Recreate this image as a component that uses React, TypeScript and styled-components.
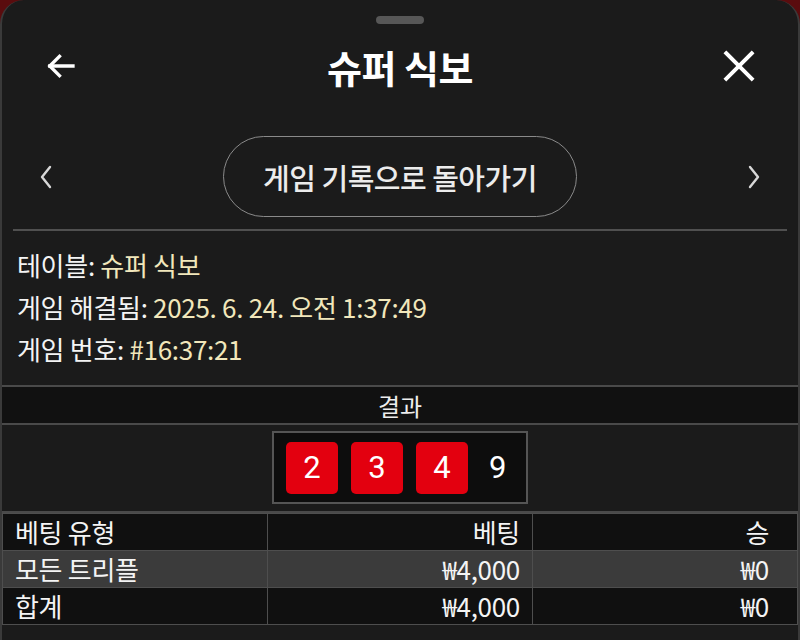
import React from 'react';
import styled, { createGlobalStyle } from 'styled-components';

// ===== DATA =====
const INFO = [
  { label: '테이블', value: '슈퍼 식보' },
  { label: '게임 해결됨', value: '2025. 6. 24. 오전 1:37:49' },
  { label: '게임 번호', value: '#16:37:21' },
];

const DICE = [2, 3, 4];
const TOTAL = 9;

const ROWS = [
  { type: '모든 트리플', bet: '₩4,000', win: '₩0', highlight: true },
  { type: '합계', bet: '₩4,000', win: '₩0', highlight: false },
];

// ===== GLOBAL =====
const GlobalStyle = createGlobalStyle`
  html, body {
    margin: 0;
    padding: 0;
    background: #5a0c0e;
  }
  body {
    font-family: "Noto Sans CJK KR", "Noto Sans", "Liberation Sans", sans-serif;
    color: #f2f2f2;
  }
  * { box-sizing: border-box; }
`;

// ===== STYLED =====
const Sheet = styled.div`
  width: 800px;
  min-height: 640px;
  background: #1b1b1b;
  border-left: 2px solid #3a3a3a;
  border-right: 2px solid #3a3a3a;
  border-radius: 24px 24px 0 0;
  overflow: hidden;
`;

const Handle = styled.div`
  width: 48px;
  height: 8px;
  margin: 16px auto 0;
  border-radius: 4px;
  background: #575757;
`;

const Header = styled.div`
  height: 84px;
  padding: 0 40px;
  display: flex;
  align-items: center;
  justify-content: space-between;
`;

const IconButton = styled.button`
  width: 38px;
  height: 38px;
  padding: 0;
  border: none;
  background: none;
  color: #fff;
  display: flex;
  align-items: center;
  justify-content: center;
  cursor: pointer;
`;

const Title = styled.h1`
  margin: 0;
  font-size: 38px;
  font-weight: 700;
  color: #fff;
  letter-spacing: -0.5px;
`;

const NavRow = styled.div`
  margin-top: 28px;
  height: 81px;
  padding: 0 34px;
  display: flex;
  align-items: center;
  justify-content: space-between;
`;

const Chevron = styled.button`
  width: 20px;
  height: 30px;
  padding: 0;
  border: none;
  background: none;
  color: #d8d8d8;
  display: flex;
  align-items: center;
  justify-content: center;
  cursor: pointer;
`;

const PillButton = styled.button`
  width: 354px;
  height: 81px;
  border: 1.5px solid #8a8a8a;
  border-radius: 41px;
  background: transparent;
  color: #ececec;
  font-family: inherit;
  font-size: 29px;
  font-weight: 500;
  letter-spacing: -0.5px;
  cursor: pointer;
`;

const Divider = styled.div`
  height: 2px;
  margin: 12px 11px 0;
  background: #505050;
`;

const InfoBlock = styled.div`
  padding: 13px 15px 15px;
  display: flex;
  flex-direction: column;
`;

const InfoLine = styled.div`
  height: 42px;
  line-height: 42px;
  font-size: 26px;
  color: #f4f4f4;
  letter-spacing: -0.3px;
`;

const InfoValue = styled.span`
  color: #f1e7bb;
`;

const SectionHeader = styled.div`
  height: 40px;
  border-top: 2px solid #4a4a4a;
  border-bottom: 2px solid #4a4a4a;
  background: #111;
  display: flex;
  align-items: center;
  justify-content: center;
  font-size: 24px;
  color: #ededed;
`;

const ResultArea = styled.div`
  padding: 6px 0 7px;
  display: flex;
  justify-content: center;
  border-bottom: 2px solid #4a4a4a;
`;

const DiceBox = styled.div`
  width: 256px;
  height: 73px;
  padding: 0 12px;
  border: 2px solid #555;
  background: #0d0d0d;
  display: flex;
  align-items: center;
  gap: 13px;
`;

const Die = styled.div`
  width: 52px;
  height: 52px;
  border-radius: 5px;
  background: #e3000f;
  color: #fff;
  display: flex;
  align-items: center;
  justify-content: center;
  font-family: "Roboto", "Liberation Sans", sans-serif;
  font-size: 31px;
`;

const Total = styled.span`
  margin-left: 8px;
  font-family: "Roboto", "Liberation Sans", sans-serif;
  font-size: 31px;
  color: #fff;
`;

const Table = styled.table`
  width: 100%;
  border-collapse: collapse;
  table-layout: fixed;
  font-size: 26px;
  letter-spacing: -0.3px;
`;

const Row = styled.tr<{ $highlight?: boolean }>`
  background: ${p => (p.$highlight ? '#3b3b3b' : '#101010')};
`;

const Cell = styled.td<{ $align?: 'left' | 'right'; $last?: boolean }>`
  height: 37px;
  padding: 0 ${p => (p.$last ? '28px' : '12px')} 0 12px;
  text-align: ${p => p.$align ?? 'left'};
  line-height: 34px;
  border: 1.5px solid #4e4e4e;
  color: #f4f4f4;
  white-space: nowrap;
`;

// ===== ICONS =====
const BackIcon = () => (
  <svg width="36" height="36" viewBox="0 0 24 24" fill="none" stroke="currentColor" strokeWidth="2.2" strokeLinecap="square">
    <path d="M20 12H4.5" />
    <path d="M11 5.5L4.5 12L11 18.5" />
  </svg>
);

const CloseIcon = () => (
  <svg width="36" height="36" viewBox="0 0 24 24" fill="none" stroke="currentColor" strokeWidth="2.6" strokeLinecap="square">
    <path d="M3.5 3.5L20.5 20.5" />
    <path d="M20.5 3.5L3.5 20.5" />
  </svg>
);

const ChevronIcon = ({ dir }: { dir: 'left' | 'right' }) => (
  <svg width="16" height="26" viewBox="0 0 16 26" fill="none" stroke="currentColor" strokeWidth="2.4" strokeLinecap="round" strokeLinejoin="round">
    {dir === 'left' ? <path d="M12 3L4 13L12 23" /> : <path d="M4 3L12 13L4 23" />}
  </svg>
);

// ===== APP =====
export default function App() {
  return (
    <>
      <GlobalStyle />
      <Sheet>
        <Handle />
        <Header>
          <IconButton aria-label="뒤로"><BackIcon /></IconButton>
          <Title>슈퍼 식보</Title>
          <IconButton aria-label="닫기"><CloseIcon /></IconButton>
        </Header>

        <NavRow>
          <Chevron aria-label="이전"><ChevronIcon dir="left" /></Chevron>
          <PillButton>게임 기록으로 돌아가기</PillButton>
          <Chevron aria-label="다음"><ChevronIcon dir="right" /></Chevron>
        </NavRow>

        <Divider />

        <InfoBlock>
          {INFO.map(item => (
            <InfoLine key={item.label}>
              {item.label}: <InfoValue>{item.value}</InfoValue>
            </InfoLine>
          ))}
        </InfoBlock>

        <SectionHeader>결과</SectionHeader>

        <ResultArea>
          <DiceBox>
            {DICE.map((d, i) => (
              <Die key={i}>{d}</Die>
            ))}
            <Total>{TOTAL}</Total>
          </DiceBox>
        </ResultArea>

        <Table>
          <tbody>
            <Row>
              <Cell>베팅 유형</Cell>
              <Cell $align="right">베팅</Cell>
              <Cell $align="right" $last>승</Cell>
            </Row>
            {ROWS.map(r => (
              <Row key={r.type} $highlight={r.highlight}>
                <Cell>{r.type}</Cell>
                <Cell $align="right">{r.bet}</Cell>
                <Cell $align="right" $last>{r.win}</Cell>
              </Row>
            ))}
          </tbody>
        </Table>
      </Sheet>
    </>
  );
}
